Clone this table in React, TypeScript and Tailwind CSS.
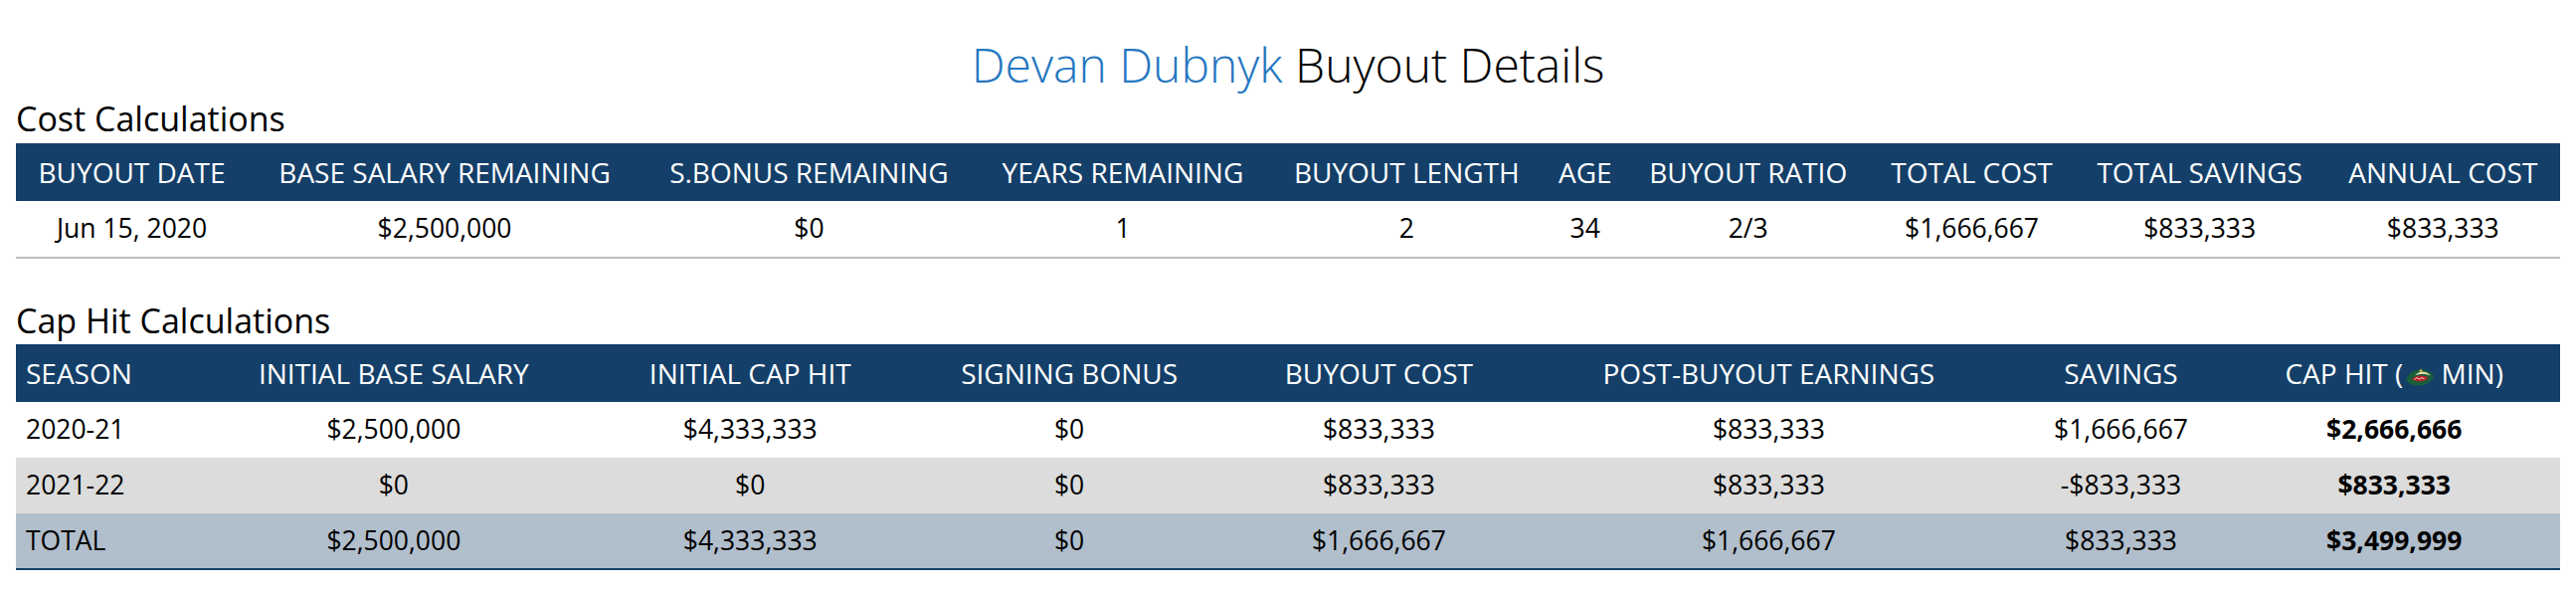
import React from 'react';

const costHeaders = [
  'BUYOUT DATE',
  'BASE SALARY REMAINING',
  'S.BONUS REMAINING',
  'YEARS REMAINING',
  'BUYOUT LENGTH',
  'AGE',
  'BUYOUT RATIO',
  'TOTAL COST',
  'TOTAL SAVINGS',
  'ANNUAL COST',
];

const costRow = ['Jun 15, 2020', '$2,500,000', '$0', '1', '2', '34', '2/3', '$1,666,667', '$833,333', '$833,333'];

const capRows = [
  { season: '2020-21', cells: ['$2,500,000', '$4,333,333', '$0', '$833,333', '$833,333', '$1,666,667'], hit: '$2,666,666', bg: 'bg-white' },
  { season: '2021-22', cells: ['$0', '$0', '$0', '$833,333', '$833,333', '-$833,333'], hit: '$833,333', bg: 'bg-[#dcdcdc]' },
  { season: 'TOTAL', cells: ['$2,500,000', '$4,333,333', '$0', '$1,666,667', '$1,666,667', '$833,333'], hit: '$3,499,999', bg: 'bg-[#b1becb]' },
];

// small Minnesota Wild crest for the cap hit header
const WildLogo = () => (
  <svg width="28" height="20" viewBox="0 0 28 20" className="inline-block align-[-3px] ml-[3px]">
    <path d="M0.5 13 C1.5 6.5 8 2.5 15 2.5 C21.5 2.5 26.5 5.5 27.8 9 C26.5 14.5 20 18.5 13 18.5 C6.5 18.5 2.5 16.5 0.5 13 Z" fill="#17603a" />
    <path d="M6 12.6 C7.5 10 10.5 8.5 15 8.5 C18.5 8.5 21 9.5 22.5 10.6 C21 13 18 14.4 14 14.4 C10.5 14.4 7.8 13.8 6 12.6 Z" fill="#b91f2e" />
    <path d="M9 8.4 C11 5.6 15 4.4 19 5 C22 5.6 23.6 7 24.2 8.4 C21 7.2 18 6.9 15 7.1 C12.5 7.3 10.5 7.8 9 8.4 Z" fill="#eadcb0" />
    <path d="M13.2 4.8 L15 1.4 L16.8 4.6 Z" fill="#f2c440" />
    <path d="M8.5 12.4 L11 10.6 L13.5 12.2 L16 10.6 L18.5 12" stroke="#eadcb0" strokeWidth="1" fill="none" />
  </svg>
);

const App: React.FC = () => {
  return (
    <div className="min-h-screen bg-white px-[16px] text-black" style={{ fontFamily: '"Open Sans", "Liberation Sans", sans-serif' }}>
      <h1 className="pt-[36px] text-center text-[48px] font-light leading-[58px]">
        <span className="text-[#2577c2]">Devan Dubnyk</span> Buyout Details
      </h1>

      {/* Cost table */}
      <h2 className="mt-[7px] mb-[7px] text-[34px] leading-[36px]">Cost Calculations</h2>
      <table className="w-full border-collapse border-b-2 border-[#bdbdbd]">
        <thead>
          <tr className="bg-[#143f69] text-white">
            {costHeaders.map((h) => (
              <th key={h} className="h-[58px] px-[10px] text-center text-[28px] font-normal whitespace-nowrap">
                {h}
              </th>
            ))}
          </tr>
        </thead>
        <tbody>
          <tr>
            {costRow.map((c, i) => (
              <td key={i} className="h-[57px] px-[10px] text-center text-[26.5px] whitespace-nowrap">
                {c}
              </td>
            ))}
          </tr>
        </tbody>
      </table>

      {/* Cap hit table */}
      <h2 className="mt-[44px] mb-[6px] text-[34px] leading-[36px]">Cap Hit Calculations</h2>
      <table className="w-full border-collapse border-b-2 border-[#143f69]">
        <thead>
          <tr className="bg-[#143f69] text-white">
            <th className="h-[58px] px-[10px] text-left text-[28px] font-normal whitespace-nowrap">SEASON</th>
            <th className="px-[10px] text-center text-[28px] font-normal whitespace-nowrap">INITIAL BASE SALARY</th>
            <th className="px-[10px] text-center text-[28px] font-normal whitespace-nowrap">INITIAL CAP HIT</th>
            <th className="px-[10px] text-center text-[28px] font-normal whitespace-nowrap">SIGNING BONUS</th>
            <th className="px-[10px] text-center text-[28px] font-normal whitespace-nowrap">BUYOUT COST</th>
            <th className="px-[10px] text-center text-[28px] font-normal whitespace-nowrap">POST-BUYOUT EARNINGS</th>
            <th className="px-[10px] text-center text-[28px] font-normal whitespace-nowrap">SAVINGS</th>
            <th className="px-[10px] text-center text-[28px] font-normal whitespace-nowrap">
              CAP HIT (<WildLogo /> MIN)
            </th>
          </tr>
        </thead>
        <tbody>
          {capRows.map((r) => (
            <tr key={r.season} className={r.bg}>
              <td className="h-[56px] px-[10px] text-left text-[26.5px] whitespace-nowrap">{r.season}</td>
              {r.cells.map((c, i) => (
                <td key={i} className="px-[10px] text-center text-[26.5px] whitespace-nowrap">
                  {c}
                </td>
              ))}
              <td className="px-[10px] text-center text-[26.5px] font-bold whitespace-nowrap">{r.hit}</td>
            </tr>
          ))}
        </tbody>
      </table>
    </div>
  );
};

export default App;
